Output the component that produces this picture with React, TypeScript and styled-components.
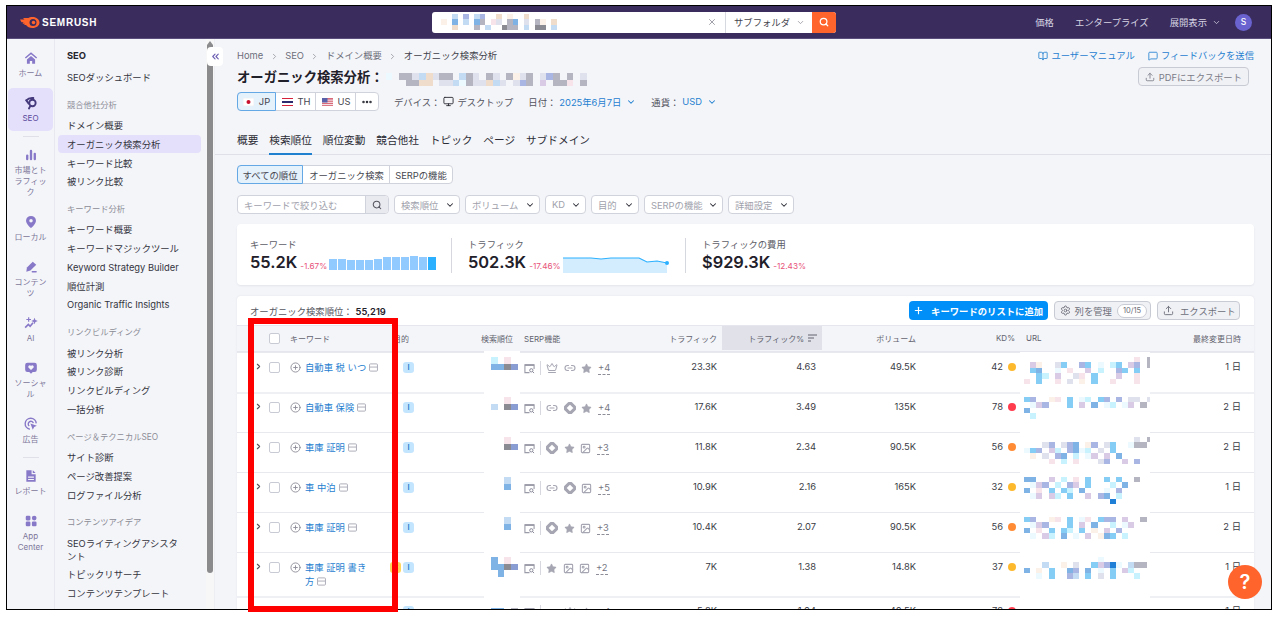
import React from "react";
import styled, { createGlobalStyle } from "styled-components";
import {
  BookOpen,
  ChevronDown,
  ChevronRight,
  ChevronsLeft,
  CirclePlus,
  Crown,
  Diamond,
  Ellipsis,
  Image as ImageIcon,
  Link2,
  MessageSquare,
  Monitor,
  Plus,
  Search,
  Settings,
  Star,
  Upload,
  X,
} from "lucide-react";

const FONT = `Inter, "Noto Sans CJK JP", "Noto Sans", sans-serif`;

const GlobalStyle = createGlobalStyle`
  html, body {
    margin: 0;
    padding: 0;
    height: 100%;
    background: #fff;
    overflow: hidden;
    font-family: ${FONT};
  }
  * { box-sizing: border-box; }
`;

/* ---------- mosaic (the blurred-out parts of the picture) ---------- */

const PALETTE: Record<string, string> = {
  a: "#85cdf5",
  b: "#a9b6e3",
  c: "#d9cbe5",
  d: "#c9f2ff",
  e: "#f6e4ea",
  f: "#dfe2ec",
  g: "#b4b5c0",
  h: "#7fb3e6",
  i: "#fbf1e8",
  j: "#ecfaff",
  k: "#1f7fd6",
  l: "#c3dcf3",
  m: "#8a8a92",
  n: "#8a9dd2",
  o: "#f0dccb",
};

const Mosaic: React.FC<{ rows: string[]; w: number; h: number }> = ({ rows, w, h }) => {
  const cols = Math.max(...rows.map((r) => r.length));
  return (
    <svg width={cols * w} height={rows.length * h} shapeRendering="crispEdges" style={{ display: "block", flex: "none" }}>
      {rows.map((row, y) =>
        row.split("").map((c, x) =>
          PALETTE[c] ? <rect key={`${x}-${y}`} x={x * w} y={y * h} width={w} height={h} fill={PALETTE[c]} /> : null,
        ),
      )}
    </svg>
  );
};

/* ---------- frame ---------- */

const Frame = styled.div`
  position: relative;
  margin: 5px 0 0 6px;
  width: 1266px;
  height: 605px;
  border: 1px solid #000;
  overflow: hidden;
  display: flex;
  flex-direction: column;
  background: #f4f5f9;
  color: #2b2c35;
  font-size: 9.33px;
`;

const RedBox = styled.div`
  position: absolute;
  left: 248px;
  top: 318px;
  width: 150px;
  height: 294px;
  border: 6px solid #fe0000;
  pointer-events: none;
`;

/* ---------- top bar ---------- */

const TopBar = styled.header`
  flex: none;
  height: 33px;
  background: #3a2d5e;
  border-bottom: 1px solid #5a4f7c;
  display: flex;
  align-items: center;
  position: relative;
  padding: 0 19px 0 13px;
`;

const Brand = styled.div`
  display: flex;
  align-items: center;
  gap: 2px;
  width: 412px;
  color: #fff;
  font: 700 10px "Liberation Sans", sans-serif;
  letter-spacing: 0.75px;
`;

const SearchBox = styled.div`
  display: flex;
  width: 404px;
  height: 21px;
  border-radius: 3px;
  overflow: hidden;
  background: #fff;
  align-items: center;
`;

const SearchValue = styled.div`
  flex: 1;
  padding-left: 9px;
  display: flex;
  align-items: center;
`;

const ClearIcon = styled(X)`
  color: #8d8e98;
  margin-right: 8px;
`;

const ScopeSelect = styled.div`
  width: 87px;
  height: 100%;
  border-left: 1px solid #d8d9e0;
  display: flex;
  align-items: center;
  gap: 6px;
  padding-left: 8px;
  color: #45464f;
`;

const ScopeChevron = styled(ChevronDown)`
  color: #8d8e98;
`;

const SearchButton = styled.div`
  width: 24px;
  height: 100%;
  background: #ff642d;
  color: #fff;
  display: flex;
  align-items: center;
  justify-content: center;
`;

const TopNav = styled.nav`
  margin-left: auto;
  display: flex;
  align-items: center;
  gap: 21px;
  color: #d8d5e3;
`;

const TopNavItem = styled.span`
  display: flex;
  align-items: center;
  gap: 5px;
`;

const Avatar = styled.span`
  width: 17px;
  height: 17px;
  border-radius: 50%;
  margin-left: -7px;
  background: #6a63cf;
  color: #fff;
  font-size: 8.5px;
  font-weight: 500;
  display: flex;
  align-items: center;
  justify-content: center;
`;

/* ---------- left rail ---------- */

const Body = styled.div`
  flex: 1;
  min-height: 0;
  display: flex;
  position: relative;
`;

const Rail = styled.aside`
  flex: none;
  width: 48px;
  padding: 4px 1px 0 1px;
  border-right: 1px solid #e8e9f0;
  display: flex;
  flex-direction: column;
  gap: 2px;
`;

const RailItem = styled.div<{ $active?: boolean }>`
  padding: 8px 2px 7px;
  border-radius: 5px;
  background: ${(p) => (p.$active ? "#e4e0fb" : "transparent")};
  color: ${(p) => (p.$active ? "#5a4a9c" : "#7d7799")};
  display: flex;
  flex-direction: column;
  align-items: center;
  gap: 3px;
  text-align: center;
  font-size: 8px;
  line-height: 11px;
  svg {
    display: block;
    width: 14px;
    height: 14px;
    fill: #8878c8;
  }
`;

const RailLabel = styled.span`
  width: 34px;
`;

const RailDivider = styled.div`
  width: 16px;
  height: 1px;
  background: #dfe0e8;
  margin: 3px auto 1px;
  flex: none;
`;

/* ---------- sidebar ---------- */

const Sidebar = styled.aside`
  flex: none;
  width: 151px;
  padding: 8px 0 0 3px;
  overflow: hidden;
`;

const SideHead = styled.div`
  font-weight: 700;
  line-height: 18.75px;
  padding-left: 9px;
  color: #25262e;
  margin-bottom: 2px;
`;

const SideTitle = styled.div`
  font-size: 8.3px;
  line-height: 12px;
  padding-left: 9px;
  margin: 12.4px 0 5px;
  color: #8b8c96;
`;

const SideItem = styled.div<{ $active?: boolean }>`
  width: 143px;
  min-height: 18.75px;
  padding: 3.2px 16px 2px 9px;
  line-height: 13px;
  border-radius: 4px;
  color: #33343d;
  background: ${(p) => (p.$active ? "#e4e0fb" : "transparent")};
`;

const ScrollTrack = styled.div`
  flex: none;
  width: 9px;
  background: #f7f7f8;
  border-right: 1px solid #eceef3;
  padding-left: 0.5px;
`;

const ScrollThumb = styled.div`
  margin-top: 6px;
  width: 6px;
  height: 528px;
  background: #8b8b8e;
  border-radius: 0 0 3px 3px;
`;

const ScrollArrow = styled.div`
  position: absolute;
  top: 2px;
  left: 200px;
  width: 0;
  height: 0;
  border: 3px solid transparent;
  border-top: 0;
  border-bottom: 4px solid #8b8b8e;
`;

const CollapseButton = styled.div`
  position: absolute;
  left: 200px;
  top: 8px;
  width: 16px;
  height: 19px;
  background: #fff;
  border-radius: 4px;
  color: #6d5fb3;
  display: flex;
  align-items: center;
  justify-content: center;
`;

/* ---------- page head ---------- */

const Main = styled.main`
  flex: 1;
  min-width: 0;
  padding: 0 17px 0 22px;
  overflow: hidden;
`;

const PageHead = styled.div`
  display: flex;
  justify-content: space-between;
  padding-top: 11px;
`;

const Crumbs = styled.div`
  display: flex;
  align-items: center;
  gap: 6.5px;
  line-height: 12px;
  color: #6c6e79;
`;

const CrumbSep = styled(ChevronRight)`
  color: #8d8e98;
`;

const CrumbCurrent = styled.span`
  color: #3e3f49;
`;

const TitleRow = styled.div`
  display: flex;
  align-items: center;
  gap: 2px;
  margin-top: 6px;
  height: 18px;
`;

const Title = styled.h1`
  margin: 0;
  font-size: 13.33px;
  line-height: 18px;
  font-weight: 700;
  color: #1f2029;
`;

const TitleMosaic = styled.div`
  display: flex;
  gap: 7px;
  margin-top: 5px;
`;

const MetaRow = styled.div`
  display: flex;
  align-items: center;
  margin-top: 6px;
  height: 19px;
`;

const Group = styled.div`
  display: flex;
  height: 19px;
  width: fit-content;
  background: #fff;
  border: 1px solid #d1d3dc;
  border-radius: 4px;
`;

const GroupItem = styled.div<{ $active?: boolean; $w: number }>`
  width: ${(p) => p.$w}px;
  display: flex;
  align-items: center;
  justify-content: center;
  gap: 5px;
  margin: -1px 0;
  color: #45464f;
  border: 1px solid ${(p) => (p.$active ? "#64a9e6" : "transparent")};
  border-right-color: ${(p) => (p.$active ? "#64a9e6" : "#d1d3dc")};
  border-radius: ${(p) => (p.$active ? "4px 0 0 4px" : "0")};
  margin-left: ${(p) => (p.$active ? "-1px" : "0")};
  background: ${(p) => (p.$active ? "#e5f1fb" : "transparent")};
  &:last-child {
    border-right-color: transparent;
  }
`;

const Meta = styled.div`
  display: flex;
  align-items: center;
  gap: 3px;
  color: #52535d;
  white-space: nowrap;
`;

const DeviceMeta = styled(Meta)`
  margin-left: 15px;
`;

const DateMeta = styled(Meta)`
  margin-left: 15px;
`;

const MoneyMeta = styled(Meta)`
  margin-left: 15px;
`;

const MetaLink = styled.span`
  color: #1f80d0;
  display: flex;
  align-items: center;
  gap: 5px;
`;

const HeadRight = styled.div`
  display: flex;
  flex-direction: column;
  align-items: flex-end;
`;

const HeadLinks = styled.div`
  display: flex;
  gap: 13px;
  line-height: 12px;
`;

const HeadLink = styled.span`
  display: flex;
  align-items: center;
  gap: 3px;
  color: #1f80d0;
`;

const GreyButton = styled.div`
  display: flex;
  align-items: center;
  gap: 4px;
  height: 19px;
  padding: 0 6px;
  border: 1px solid #c9cbd4;
  border-radius: 4px;
  background: #f0f1f5;
  color: #6c6e79;
  white-space: nowrap;
`;

const PdfButton = styled(GreyButton)`
  margin: 5px 5px 0 0;
  color: #7b7c87;
`;

const ManageButton = styled(GreyButton)`
  padding: 0 3px 0 5px;
`;

const ExportButton = styled(GreyButton)`
  width: 83px;
  gap: 6px;
  padding: 0 0 0 5px;
`;

/* ---------- tabs and filters ---------- */

const Tabs = styled.div`
  display: flex;
  gap: 10.9px;
  margin: 17px -17px 0 -22px;
  padding-left: 22px;
  height: 27px;
  border-bottom: 1px solid #dfe0e8;
`;

const Tab = styled.div<{ $active?: boolean }>`
  font-size: 10.67px;
  line-height: 14px;
  padding-top: 6px;
  height: 27px;
  color: #2b2c35;
  border-bottom: 2px solid ${(p) => (p.$active ? "#1f80d0" : "transparent")};
`;

const Segments = styled(Group)`
  margin-top: 10px;
`;

const FilterRow = styled.div`
  display: flex;
  gap: 5px;
  margin-top: 11px;
  height: 19px;
`;

const FilterSearch = styled.div`
  width: 152px;
  display: flex;
  background: #fff;
  border: 1px solid #d1d3dc;
  border-radius: 4px;
  overflow: hidden;
  color: #a0a1ab;
  align-items: center;
  padding-left: 6px;
  justify-content: space-between;
`;

const FilterSearchIcon = styled.div`
  width: 23px;
  height: 100%;
  background: #e9eaf0;
  border-left: 1px solid #d1d3dc;
  color: #55565f;
  display: flex;
  align-items: center;
  justify-content: center;
`;

const FilterSelect = styled.div<{ $w: number }>`
  width: ${(p) => p.$w}px;
  background: #fff;
  border: 1px solid #d1d3dc;
  border-radius: 4px;
  color: #a0a1ab;
  display: flex;
  align-items: center;
  justify-content: space-between;
  padding: 0 4px 0 6px;
  white-space: nowrap;
  svg {
    color: #2b2c35;
  }
`;

/* ---------- stats ---------- */

const StatsCard = styled.section`
  margin-top: 10px;
  height: 61px;
  background: #fff;
  border-radius: 4px;
  box-shadow: 0 1px 2px rgba(40, 40, 80, 0.08);
  display: flex;
  align-items: center;
  padding-left: 13px;
`;

const Stat = styled.div<{ $w: number }>`
  width: ${(p) => p.$w}px;
  height: 35px;
  margin-top: 1px;
  & + & {
    border-left: 1px solid #d7d8df;
    padding-left: 16px;
  }
`;

const StatLabel = styled.div`
  line-height: 13px;
  color: #5c5d67;
`;

const StatRow = styled.div`
  display: flex;
  align-items: flex-end;
  margin-top: 1px;
  height: 21px;
`;

const StatValue = styled.span`
  font-size: 16.4px;
  line-height: 21px;
  font-weight: 600;
  color: #1f2029;
`;

const StatDelta = styled.span`
  margin: 0 2px 1px 3px;
  font-size: 8.2px;
  line-height: 12px;
  color: #e8537a;
  white-space: nowrap;
`;

const Bars = styled.div`
  display: flex;
  align-items: flex-end;
  gap: 1px;
  height: 14px;
  margin-bottom: 3px;
`;

const Bar = styled.div<{ $h: number; $last?: boolean }>`
  width: 8px;
  height: ${(p) => p.$h}px;
  background: ${(p) => (p.$last ? "#2bb0ff" : "#90caff")};
`;

/* ---------- table ---------- */

const TableCard = styled.section`
  margin-top: 11px;
  background: #fff;
  border-radius: 4px 4px 0 0;
  box-shadow: 0 0 2px rgba(40, 40, 80, 0.1);
`;

const TableBar = styled.div`
  height: 29px;
  display: flex;
  align-items: center;
  padding: 0 14px 0 13px;
  gap: 6px;
`;

const TableCount = styled.div`
  color: #55565f;
  margin-right: auto;
  margin-top: 1px;
  b {
    color: #1f2029;
    font-weight: 600;
    margin-left: 3px;
  }
`;

const BlueButton = styled.div`
  height: 19px;
  width: 139px;
  border-radius: 4px;
  background: #008ff8;
  color: #fff;
  font-weight: 600;
  display: flex;
  align-items: center;
  justify-content: center;
  gap: 7px;
`;

const Pill = styled.span`
  border: 1px solid #c9cbd4;
  border-radius: 8px;
  background: #fff;
  padding: 0 5px;
  line-height: 12px;
  font-size: 7.5px;
  margin-left: 1px;
`;

const GRID = "48px 105px 90px 38px 132px 72px 100px 100px 98px 130px 104px";

const HeadRow = styled.div`
  display: grid;
  grid-template-columns: ${GRID};
  height: 27px;
  background: #f4f5f9;
  border-top: 1px solid #e6e7ee;
  border-bottom: 1px solid #e6e7ee;
  font-size: 8px;
  color: #62636e;
`;

const HeadCell = styled.div<{ $right?: boolean; $pad?: number; $sorted?: boolean }>`
  display: flex;
  align-items: center;
  gap: 4px;
  white-space: nowrap;
  margin-bottom: 1px;
  justify-content: ${(p) => (p.$right ? "flex-end" : "flex-start")};
  padding: ${(p) => (p.$right ? `0 ${p.$pad ?? 5}px 0 0` : `0 0 0 ${p.$pad ?? 0}px`)};
  background: ${(p) => (p.$sorted ? "#e0e1e9" : "transparent")};
`;

const Row = styled.div<{ $h: number; $thick?: boolean }>`
  display: grid;
  grid-template-columns: ${GRID};
  height: ${(p) => p.$h}px;
  border-top: 1px solid ${(p) => (p.$thick ? "#eff0f4" : "#e8e9ef")};
  box-shadow: ${(p) => (p.$thick ? "inset 0 1px 0 #eff0f4" : "none")};
  line-height: 12px;
  color: #3a3b45;
`;

const Cell = styled.div<{ $right?: boolean; $pad?: number }>`
  padding: 8px ${(p) => (p.$right ? (p.$pad ?? 5) : 0)}px 0 ${(p) => (p.$right ? 0 : (p.$pad ?? 0))}px;
  text-align: ${(p) => (p.$right ? "right" : "left")};
  white-space: nowrap;
`;

const CheckCell = styled.div`
  display: flex;
  align-items: flex-start;
  justify-content: flex-end;
  gap: 6px;
  padding: 8px 5px 0 0;
`;

const Expand = styled(ChevronRight)`
  color: #55565f;
  margin-top: 1px;
`;

const Checkbox = styled.span`
  display: block;
  width: 11px;
  height: 11px;
  margin-top: 1px;
  background: #fff;
  border: 1px solid #c9cbd4;
  border-radius: 2px;
`;

const HeadCheck = styled(Checkbox)`
  margin: 0 5px 0 32px;
`;

const KeywordCell = styled.div`
  display: flex;
  gap: 4px;
  padding: 8px 0 0 5px;
`;

const AddIcon = styled(CirclePlus)`
  flex: none;
  color: #8d8e98;
  margin-top: 1px;
`;

const KeywordLink = styled.span`
  color: #1f80d0;
  line-height: 14px;
  white-space: nowrap;
`;

const DocIcon = styled.svg`
  display: inline-block;
  vertical-align: -1px;
  margin-left: 3px;
  width: 9px;
  height: 9px;
`;

const IntentCell = styled.div`
  display: flex;
  justify-content: flex-end;
  gap: 2px;
  width: 24px;
  padding-top: 8px;
`;

const Intent = styled.span<{ $tone: "blue" | "yellow" }>`
  width: 11px;
  height: 11px;
  margin-top: 1px;
  border-radius: 3px;
  background: ${(p) => (p.$tone === "blue" ? "#c4e5fe" : "#ffd65c")};
  color: ${(p) => (p.$tone === "blue" ? "#1d7ccc" : "#b98a00")};
  font-size: 7.5px;
  font-weight: 600;
  line-height: 11px;
  text-align: center;
`;

const RankCell = styled.div`
  margin: -2px -2px -2px 4px;
  padding: 6px 0 0 7px;
  background: #fff;
  align-self: stretch;
`;

const SerpCell = styled.div`
  display: flex;
  align-items: center;
  height: 14px;
  margin-top: 8px;
  padding-left: 6px;
  color: #a5a6b2;
`;

const SerpPage = styled.svg`
  width: 11px;
  height: 11px;
  flex: none;
`;

const SerpDivider = styled.span`
  width: 1px;
  height: 14px;
  background: #d7d8df;
  margin: 0 5px 0 5px;
`;

const SerpIcons = styled.span`
  display: flex;
  align-items: center;
  gap: 5.5px;
  svg {
    flex: none;
  }
`;

const SerpMore = styled.span`
  margin-left: 6px;
  color: #757682;
  line-height: 12px;
  border-bottom: 1px dashed #8d8e98;
`;

const KdCell = styled.div`
  display: flex;
  justify-content: flex-end;
  align-items: flex-start;
  gap: 5px;
  padding: 8px 4px 0 0;
`;

const KdDot = styled.span<{ $color: string }>`
  width: 8px;
  height: 8px;
  margin-top: 2px;
  border-radius: 50%;
  background: ${(p) => p.$color};
`;

const UrlCell = styled.div`
  margin: -1px 0;
  padding: 5px 0 0 4px;
  background: #fff;
  overflow: hidden;
`;

const SortIcon = styled.svg`
  width: 9px;
  height: 8px;
`;

const HelpButton = styled.div`
  position: absolute;
  left: 1221px;
  top: 526px;
  width: 34px;
  height: 34px;
  border-radius: 50%;
  background: #ff642d;
  color: #fff;
  font-size: 20px;
  font-weight: 600;
  display: flex;
  align-items: center;
  justify-content: center;
`;

/* ---------- small drawings ---------- */

const Logo = () => (
  <svg width="20" height="11" viewBox="0 0 40 22">
    <path
      d="M0 5h9l-3-3h11C19 .8 21 0 25 0c8 0 14 5 14 11s-6 11-14 11c-6 0-10-2-13-6H8l2-2.500H5l2-3H3L0 5z"
      fill="#ff642d"
    />
    <circle cx="26" cy="11" r="7" fill="#3a2d5e" />
    <circle cx="27" cy="11" r="3.500" fill="#ff642d" />
  </svg>
);

const JpFlag = () => (
  <svg width="11" height="8" viewBox="0 0 11 8">
    <rect width="11" height="8" fill="#fff" stroke="#e3e3e8" strokeWidth="0.5" />
    <circle cx="5.500" cy="4" r="2" fill="#c8102e" />
  </svg>
);

const ThFlag = () => (
  <svg width="11" height="8" viewBox="0 0 11 8" shapeRendering="crispEdges">
    <rect width="11" height="8" fill="#d6213a" />
    <rect y="1.300" width="11" height="5.400" fill="#fff" />
    <rect y="2.700" width="11" height="2.600" fill="#2d2a6e" />
  </svg>
);

const UsFlag = () => (
  <svg width="11" height="8" viewBox="0 0 11 8">
    <rect width="11" height="8" fill="#d96a7a" />
    <rect y="1.600" width="11" height="1.100" fill="#f1dfe4" />
    <rect y="3.800" width="11" height="1.100" fill="#f1dfe4" />
    <rect y="6" width="11" height="1.100" fill="#f1dfe4" />
    <rect width="5.500" height="4.500" fill="#5a61a8" />
  </svg>
);

const Doc = () => (
  <DocIcon viewBox="0 0 10 10">
    <rect x="0.600" y="1" width="8.800" height="8" rx="1" fill="none" stroke="#a5a6b2" />
    <path d="M1 4.500h8" stroke="#a5a6b2" />
  </DocIcon>
);

const PageSearch = () => (
  <SerpPage viewBox="0 0 12 12">
    <path d="M6 10.500H1V2h10v4.500" fill="none" stroke="#9a9ba8" strokeWidth="1.200" />
    <path d="M1 2.300h10" stroke="#9a9ba8" strokeWidth="1.800" />
    <circle cx="8" cy="8" r="1.800" fill="none" stroke="#7f8090" />
    <path d="M9.300 9.300l1.700 1.700" stroke="#7f8090" />
  </SerpPage>
);

const SERP_ICONS = {
  crown: <Crown size={12} strokeWidth={2} />,
  link: <Link2 size={12} strokeWidth={2.200} />,
  star: <Star size={11} fill="currentColor" strokeWidth={1} />,
  diamond: <Diamond size={12} strokeWidth={6} />,
  image: <ImageIcon size={11} strokeWidth={2.400} />,
};

type SerpName = keyof typeof SERP_ICONS;

const railIcons: Record<string, React.ReactNode> = {
  home: (
    <svg viewBox="0 0 24 24">
      <path d="M12 2 1.500 11l1.600 1.900L12 5.400l8.900 7.500 1.600-1.900z" />
      <path d="M5 14.500 12 8.500l7 6V22h-5v-5h-4v5H5z" />
    </svg>
  ),
  seo: (
    <svg viewBox="0 0 24 24">
      <g fill="none" stroke="#453a7c" strokeWidth="3.200" strokeLinecap="round">
        <circle cx="14.500" cy="12" r="5.500" />
        <path d="M11 17l-2.500 4.500" />
        <path d="M4 7.500C7 4 11 3 16 3.500" />
        <path d="M4 7.500l4 5.500" />
      </g>
    </svg>
  ),
  market: (
    <svg viewBox="0 0 24 24">
      <rect x="3.500" y="11" width="4" height="10" rx="2" />
      <rect x="10" y="3" width="4" height="18" rx="2" />
      <rect x="16.500" y="8" width="4" height="13" rx="2" />
    </svg>
  ),
  local: (
    <svg viewBox="0 0 24 24">
      <path
        fillRule="evenodd"
        d="M12 1.500a8.500 8.500 0 0 0-8.500 8.500c0 5.800 8.500 12.500 8.500 12.500s8.500-6.700 8.500-12.500A8.500 8.500 0 0 0 12 1.500zm0 11.500a3 3 0 1 1 0-6 3 3 0 0 1 0 6z"
      />
    </svg>
  ),
  content: (
    <svg viewBox="0 0 24 24">
      <path d="M15 3l6 5-10 10-7 2 1-7z" />
      <rect x="13" y="19" width="9" height="2.500" rx="1.200" />
    </svg>
  ),
  ai: (
    <svg viewBox="0 0 24 24">
      <path d="M18 3l1.600 4 4 1.600-4 1.600-1.600 4-1.600-4-4-1.600 4-1.600z" />
      <path d="M2 20l5.500-5.500 3 3 5-6" fill="none" stroke="#8878c8" strokeWidth="2.800" />
      <path d="M7 2h2v3h3v2H9v3H7V7H4V5h3z" />
    </svg>
  ),
  social: (
    <svg viewBox="0 0 24 24">
      <path d="M6 3h12a4 4 0 0 1 4 4v8a4 4 0 0 1-4 4h-3l-3 3-3-3H6a4 4 0 0 1-4-4V7a4 4 0 0 1 4-4z" />
      <path d="M12 15.500 7.500 11a2.600 2.600 0 0 1 4.500-2.500A2.600 2.600 0 0 1 16.500 11z" fill="#f4f5f9" />
    </svg>
  ),
  ads: (
    <svg viewBox="0 0 24 24">
      <g fill="none" stroke="#8878c8" strokeWidth="2.400">
        <path d="M10 21a9.500 9.500 0 1 1 11-10" />
        <path d="M9 15.500a4.500 4.500 0 1 1 7-5" />
      </g>
      <path d="M11 11l11 4-4.500 2L15 22z" />
    </svg>
  ),
  report: (
    <svg viewBox="0 0 24 24">
      <path d="M4 2h9v7h7v13H4z" />
      <path d="M15 2l5 5h-5z" />
      <path d="M7 13h10v2H7zM7 17h10v2H7z" fill="#f4f5f9" />
    </svg>
  ),
  apps: (
    <svg viewBox="0 0 24 24">
      <rect x="3" y="3" width="8" height="8" rx="2" />
      <circle cx="17.500" cy="7" r="4" />
      <rect x="3" y="13" width="8" height="8" rx="2" />
      <rect x="13.500" y="13" width="8" height="8" rx="2" />
    </svg>
  ),
};

/* ---------- data ---------- */

type RailEntry = { icon: string; label: string; active?: boolean } | "divider";

const RAIL: RailEntry[] = [
  { icon: "home", label: "ホーム" },
  { icon: "seo", label: "SEO", active: true },
  "divider",
  { icon: "market", label: "市場とトラフィック" },
  { icon: "local", label: "ローカル" },
  { icon: "content", label: "コンテンツ" },
  { icon: "ai", label: "AI" },
  { icon: "social", label: "ソーシャル" },
  { icon: "ads", label: "広告" },
  "divider",
  { icon: "report", label: "レポート" },
  { icon: "apps", label: "App Center" },
];

const SIDE_SECTIONS = [
  { title: "競合他社分析", items: ["ドメイン概要", "オーガニック検索分析", "キーワード比較", "被リンク比較"] },
  {
    title: "キーワード分析",
    items: ["キーワード概要", "キーワードマジックツール", "Keyword Strategy Builder", "順位計測", "Organic Traffic Insights"],
  },
  { title: "リンクビルディング", items: ["被リンク分析", "被リンク診断", "リンクビルディング", "一括分析"] },
  { title: "ページ＆テクニカルSEO", items: ["サイト診断", "ページ改善提案", "ログファイル分析"] },
  { title: "コンテンツアイデア", items: ["SEOライティングアシスタント", "トピックリサーチ", "コンテンツテンプレート"] },
];

const BARS = [11, 11, 10, 10, 10, 11, 13, 13, 13, 14, 13, 13];

type RowData = {
  keyword: string[];
  height: number;
  thick?: boolean;
  yellow?: boolean;
  rank: string[];
  serp: SerpName[];
  more: string;
  traffic: string;
  share: string;
  volume: string;
  kd: number;
  url: string[];
  days: string;
};

const KD_RED = "#ff3b4e";
const KD_ORANGE = "#ff8c35";
const KD_YELLOW = "#fdb92e";

const kdColor = (kd: number) => (kd >= 70 ? KD_RED : kd >= 50 ? KD_ORANGE : KD_YELLOW);

const ROWS: RowData[] = [
  {
    keyword: ["自動車 税 いつ"],
    height: 40,
    rank: ["d.e.", "hhmn"],
    serp: ["crown", "link", "star"],
    more: "+4",
    traffic: "23.3K",
    share: "4.63",
    volume: "49.5K",
    kd: 42,
    url: ["..................e.gg.", ".ci..fa..ba.j.da.cb.g..", ".ah..j.e..c.d..ba.a.....", "..ad.c..fe.a...c..e.....", "e.a..e.f.i.a..e...e...."],
    days: "1 日",
  },
  {
    keyword: ["自動車 保険"],
    height: 40,
    thick: true,
    rank: ["..e.", "l.mn"],
    serp: ["link", "diamond", "star"],
    more: "+4",
    traffic: "17.6K",
    share: "3.49",
    volume: "135K",
    kd: 78,
    url: ["ab..ie.a.jd.ab.b.ff.f", ".jcb...a.c.h.jd.jc.g", "h......................", ".d....................."],
    days: "2 日",
  },
  {
    keyword: ["車庫 証明"],
    height: 40,
    rank: ["..e.", "..mn"],
    serp: ["diamond", "star", "image"],
    more: "+3",
    traffic: "11.8K",
    share: "2.34",
    volume: "90.5K",
    kd: 56,
    url: ["..................f.g", "...fb.fbh.ib.fa..jgg", "jab.cd.bhjd.f.a....", ".i.f.bh.d.jc.c.h...", "....e.d.e...fb..c.b"],
    days: "2 日",
  },
  {
    keyword: ["車 中泊"],
    height: 40,
    rank: ["..l.", "..h."],
    serp: ["link", "diamond", "image"],
    more: "+5",
    traffic: "10.9K",
    share: "2.16",
    volume: "165K",
    kd: 32,
    url: ["hh..c.d.e.a..a.a..g.", ".jcb.d.bc.a...d.h...", "h.e.a.ad.h...j.b....", ".jc.cd.a..c.bh.d....", "..............k....."],
    days: "1 日",
  },
  {
    keyword: ["車庫 証明"],
    height: 40,
    rank: ["..l.", "..h."],
    serp: ["diamond", "star", "image"],
    more: "+3",
    traffic: "10.4K",
    share: "2.07",
    volume: "90.5K",
    kd: 56,
    url: ["ab..ie.a.je.abb.c..g", ".jcb...a.c.h..d.jc.", "h.e.a.ad.a.i.c.b...", ".j.cd.h.j.c.iha.d..."],
    days: "2 日",
  },
  {
    keyword: ["車庫 証明 書き", "方"],
    height: 44,
    yellow: true,
    rank: ["h.e.", "hhmn", ".h.."],
    serp: ["star", "image", "image"],
    more: "+2",
    traffic: "7K",
    share: "1.38",
    volume: "14.8K",
    kd: 37,
    url: ["............j.......", "...l..i.f..acbkj.lgg", "h.i.a..hb.h.j.a.cd..", "..j.a..bl.a.f.a...d."],
    days: "1 日",
  },
  {
    keyword: ["車 保険"],
    height: 40,
    thick: true,
    rank: [".", "hh.g"],
    serp: ["link", "crown", "star"],
    more: "+4",
    traffic: "5.8K",
    share: "1.04",
    volume: "40.5K",
    kd: 78,
    url: [".", ".", "hhbbhhbhbhbbhbhbh.gg"],
    days: "1 日",
  },
];

const App: React.FC = () => (
  <>
    <GlobalStyle />
    <Frame>
      <TopBar>
        <Brand>
          <Logo />
          SEMRUSH
        </Brand>
        <SearchBox>
          <SearchValue>
            <Mosaic
              w={5.500}
              h={5.300}
              rows={["..l.b.lb..o.i..o.......", "i.h.l.hg.ef.gh.f.gi.o..", "..o...g.l..mgg.l.mm.l.."]}
            />
          </SearchValue>
          <ClearIcon size={10} />
          <ScopeSelect>
            サブフォルダ
            <ScopeChevron size={9} />
          </ScopeSelect>
          <SearchButton>
            <Search size={10} strokeWidth={3} />
          </SearchButton>
        </SearchBox>
        <TopNav>
          <TopNavItem>価格</TopNavItem>
          <TopNavItem>エンタープライズ</TopNavItem>
          <TopNavItem>
            展開表示
            <ChevronDown size={9} />
          </TopNavItem>
          <Avatar>S</Avatar>
        </TopNav>
      </TopBar>

      <Body>
        <Rail>
          {RAIL.map((entry, i) =>
            entry === "divider" ? (
              <RailDivider key={i} />
            ) : (
              <RailItem key={i} $active={entry.active}>
                {railIcons[entry.icon]}
                <RailLabel>{entry.label}</RailLabel>
              </RailItem>
            ),
          )}
        </Rail>

        <Sidebar>
          <SideHead>SEO</SideHead>
          <SideItem>SEOダッシュボード</SideItem>
          {SIDE_SECTIONS.map((section) => (
            <React.Fragment key={section.title}>
              <SideTitle>{section.title}</SideTitle>
              {section.items.map((item) => (
                <SideItem key={item} $active={item === "オーガニック検索分析"}>
                  {item}
                </SideItem>
              ))}
            </React.Fragment>
          ))}
        </Sidebar>

        <ScrollTrack>
          <ScrollThumb />
        </ScrollTrack>
        <ScrollArrow />
        <CollapseButton>
          <ChevronsLeft size={11} strokeWidth={2.500} />
        </CollapseButton>

        <Main>
          <PageHead>
            <div>
              <Crumbs>
                <span>Home</span>
                <CrumbSep size={9} />
                <span>SEO</span>
                <CrumbSep size={9} />
                <span>ドメイン概要</span>
                <CrumbSep size={9} />
                <CrumbCurrent>オーガニック検索分析</CrumbCurrent>
              </Crumbs>
              <TitleRow>
                <Title>オーガニック検索分析：</Title>
                <TitleMosaic>
                  <Mosaic w={6.670} h={6.500} rows={["j", "."]} />
                  <Mosaic
                    w={6.700}
                    h={6.500}
                    rows={["ggflofgg.lgf.gf.gifg.fbg.g.f", ".ggoo.ffljgffolf.fbg.c.gge.g"]}
                  />
                </TitleMosaic>
              </TitleRow>
              <MetaRow>
                <Group>
                  <GroupItem $active $w={39}>
                    <JpFlag />
                    JP
                  </GroupItem>
                  <GroupItem $w={40}>
                    <ThFlag />
                    TH
                  </GroupItem>
                  <GroupItem $w={40}>
                    <UsFlag />
                    US
                  </GroupItem>
                  <GroupItem $w={22}>
                    <Ellipsis size={12} strokeWidth={3} color="#2b2c35" />
                  </GroupItem>
                </Group>
                <DeviceMeta>
                  デバイス：
                  <Monitor size={11} color="#2b2c35" />
                  デスクトップ
                </DeviceMeta>
                <DateMeta>
                  日付：
                  <MetaLink>
                    2025年6月7日
                    <ChevronDown size={10} strokeWidth={2.500} />
                  </MetaLink>
                </DateMeta>
                <MoneyMeta>
                  通貨：
                  <MetaLink>
                    USD
                    <ChevronDown size={10} strokeWidth={2.500} />
                  </MetaLink>
                </MoneyMeta>
              </MetaRow>
            </div>
            <HeadRight>
              <HeadLinks>
                <HeadLink>
                  <BookOpen size={10} />
                  ユーザーマニュアル
                </HeadLink>
                <HeadLink>
                  <MessageSquare size={10} />
                  フィードバックを送信
                </HeadLink>
              </HeadLinks>
              <PdfButton>
                <Upload size={10} />
                PDFにエクスポート
              </PdfButton>
            </HeadRight>
          </PageHead>

          <Tabs>
            <Tab>概要</Tab>
            <Tab $active>検索順位</Tab>
            <Tab>順位変動</Tab>
            <Tab>競合他社</Tab>
            <Tab>トピック</Tab>
            <Tab>ページ</Tab>
            <Tab>サブドメイン</Tab>
          </Tabs>

          <Segments>
            <GroupItem $active $w={66}>
              すべての順位
            </GroupItem>
            <GroupItem $w={87}>オーガニック検索</GroupItem>
            <GroupItem $w={62}>SERPの機能</GroupItem>
          </Segments>

          <FilterRow>
            <FilterSearch>
              キーワードで絞り込む
              <FilterSearchIcon>
                <Search size={10} strokeWidth={2.500} />
              </FilterSearchIcon>
            </FilterSearch>
            <FilterSelect $w={66}>
              検索順位
              <ChevronDown size={10} strokeWidth={2.500} />
            </FilterSelect>
            <FilterSelect $w={75}>
              ボリューム
              <ChevronDown size={10} strokeWidth={2.500} />
            </FilterSelect>
            <FilterSelect $w={41}>
              KD
              <ChevronDown size={10} strokeWidth={2.500} />
            </FilterSelect>
            <FilterSelect $w={48}>
              目的
              <ChevronDown size={10} strokeWidth={2.500} />
            </FilterSelect>
            <FilterSelect $w={79}>
              SERPの機能
              <ChevronDown size={10} strokeWidth={2.500} />
            </FilterSelect>
            <FilterSelect $w={66}>
              詳細設定
              <ChevronDown size={10} strokeWidth={2.500} />
            </FilterSelect>
          </FilterRow>

          <StatsCard>
            <Stat $w={201}>
              <StatLabel>キーワード</StatLabel>
              <StatRow>
                <StatValue>55.2K</StatValue>
                <StatDelta>-1.67%</StatDelta>
                <Bars>
                  {BARS.map((h, i) => (
                    <Bar key={i} $h={h} $last={i === BARS.length - 1} />
                  ))}
                </Bars>
              </StatRow>
            </Stat>
            <Stat $w={234}>
              <StatLabel>トラフィック</StatLabel>
              <StatRow>
                <StatValue>502.3K</StatValue>
                <StatDelta>-17.46%</StatDelta>
                <svg width="106" height="18" viewBox="0 0 106 18">
                  <path d="M0 3h28l10 1 10-1h28l8 4 10-1 10 2v10H0z" fill="#d3edff" />
                  <path d="M0 3h28l10 1 10-1h28l8 4 10-1 10 2" fill="none" stroke="#2bb0ff" strokeWidth="1.200" />
                  <circle cx="104" cy="8" r="2" fill="#2bb0ff" />
                </svg>
              </StatRow>
            </Stat>
            <Stat $w={300}>
              <StatLabel>トラフィックの費用</StatLabel>
              <StatRow>
                <StatValue>$929.3K</StatValue>
                <StatDelta>-12.43%</StatDelta>
              </StatRow>
            </Stat>
          </StatsCard>

          <TableCard>
            <TableBar>
              <TableCount>
                オーガニック検索順位：<b>55,219</b>
              </TableCount>
              <BlueButton>
                <Plus size={11} strokeWidth={2.500} />
                キーワードのリストに追加
              </BlueButton>
              <ManageButton>
                <Settings size={11} />
                列を管理
                <Pill>10/15</Pill>
              </ManageButton>
              <ExportButton>
                <Upload size={11} />
                エクスポート
              </ExportButton>
            </TableBar>
            <HeadRow>
              <HeadCell>
                <HeadCheck />
              </HeadCell>
              <HeadCell $pad={5}>キーワード</HeadCell>
              <HeadCell $pad={3}>目的</HeadCell>
              <HeadCell $right>検索順位</HeadCell>
              <HeadCell $pad={6}>SERP機能</HeadCell>
              <HeadCell $right>トラフィック</HeadCell>
              <HeadCell $right $sorted>
                トラフィック%
                <SortIcon viewBox="0 0 9 8">
                  <path d="M0 1h9M0 4h6M0 7h3" stroke="#62636e" />
                </SortIcon>
              </HeadCell>
              <HeadCell $right $pad={6}>
                ボリューム
              </HeadCell>
              <HeadCell $right>KD%</HeadCell>
              <HeadCell $pad={6}>URL</HeadCell>
              <HeadCell $right $pad={13}>
                最終変更日時
              </HeadCell>
            </HeadRow>
            {ROWS.map((row, i) => (
              <Row key={i} $h={row.height} $thick={row.thick}>
                <CheckCell>
                  <Expand size={9} strokeWidth={3} />
                  <Checkbox />
                </CheckCell>
                <KeywordCell>
                  <AddIcon size={11} />
                  <KeywordLink>
                    {row.keyword.map((line, j) => (
                      <React.Fragment key={j}>
                        {j > 0 && <br />}
                        {line}
                      </React.Fragment>
                    ))}
                    <Doc />
                  </KeywordLink>
                </KeywordCell>
                <IntentCell>
                  {row.yellow && <Intent $tone="yellow">C</Intent>}
                  <Intent $tone="blue">I</Intent>
                </IntentCell>
                <RankCell>
                  <Mosaic w={6.670} h={6.670} rows={row.rank} />
                </RankCell>
                <SerpCell>
                  <PageSearch />
                  <SerpDivider />
                  <SerpIcons>
                    {row.serp.map((name, j) => (
                      <React.Fragment key={j}>{SERP_ICONS[name]}</React.Fragment>
                    ))}
                  </SerpIcons>
                  <SerpMore>{row.more}</SerpMore>
                </SerpCell>
                <Cell $right>{row.traffic}</Cell>
                <Cell $right $pad={6}>
                  {row.share}
                </Cell>
                <Cell $right $pad={6}>
                  {row.volume}
                </Cell>
                <KdCell>
                  {row.kd}
                  <KdDot $color={kdColor(row.kd)} />
                </KdCell>
                <UrlCell>
                  <Mosaic w={6.130} h={5.400} rows={row.url} />
                </UrlCell>
                <Cell $right $pad={13}>
                  {row.days}
                </Cell>
              </Row>
            ))}
          </TableCard>
        </Main>
        <HelpButton>?</HelpButton>
      </Body>
    </Frame>
    <RedBox />
  </>
);

export default App;
